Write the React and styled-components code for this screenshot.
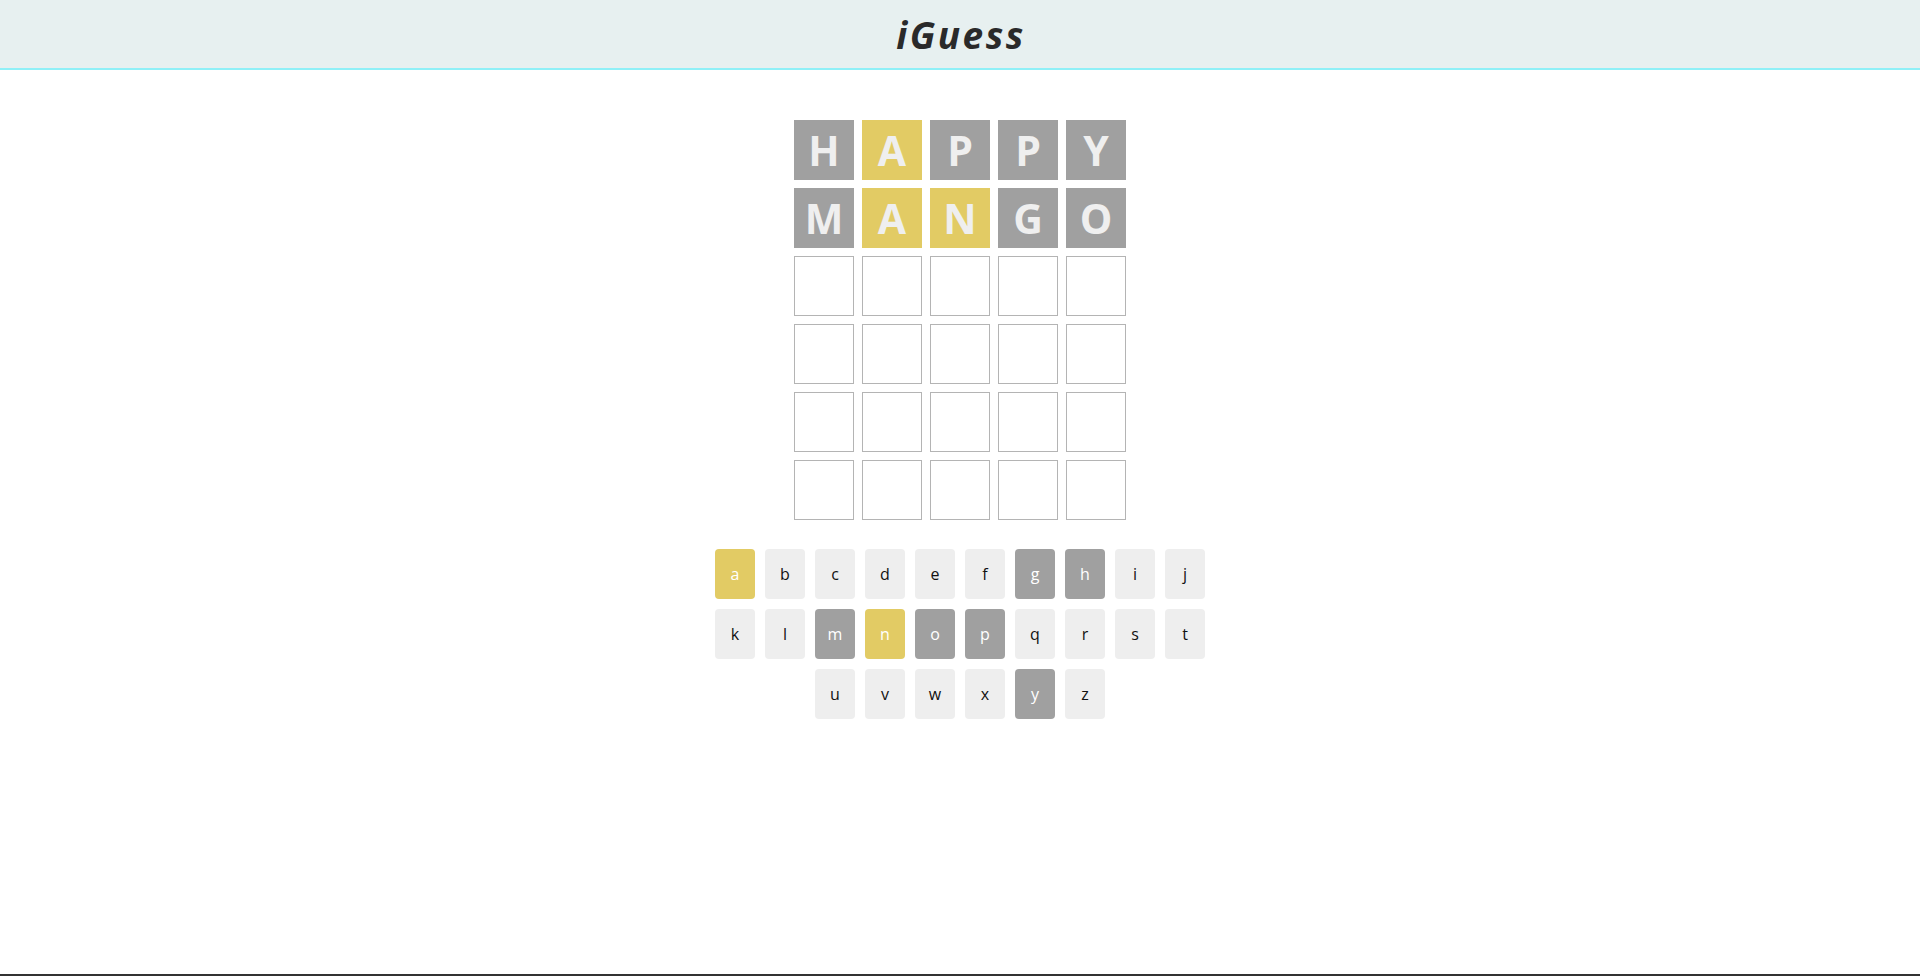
import React from 'react';
import styled, { createGlobalStyle } from 'styled-components';

const guesses = [
  { word: 'HAPPY', marks: ['gray', 'yellow', 'gray', 'gray', 'gray'] },
  { word: 'MANGO', marks: ['gray', 'yellow', 'yellow', 'gray', 'gray'] },
];

const keyRows = [
  ['a', 'b', 'c', 'd', 'e', 'f', 'g', 'h', 'i', 'j'],
  ['k', 'l', 'm', 'n', 'o', 'p', 'q', 'r', 's', 't'],
  ['u', 'v', 'w', 'x', 'y', 'z'],
];

const keyState = {
  a: 'yellow', n: 'yellow',
  g: 'gray', h: 'gray', m: 'gray', o: 'gray', p: 'gray', y: 'gray',
};

const colors = {
  gray: '#a0a0a0',
  yellow: '#e2cb64',
};

const App = () => {
  const rows = [];
  for (let r = 0; r < 6; r++) {
    const g = guesses[r];
    rows.push(
      <BoardRow key={r}>
        {[0, 1, 2, 3, 4].map((c) =>
          g ? (
            <Tile key={c} mark={g.marks[c]}>{g.word[c]}</Tile>
          ) : (
            <Tile key={c} />
          )
        )}
      </BoardRow>
    );
  }

  return (
    <>
      <GlobalStyle />
      <Page>
        <Header>
          <Title>iGuess</Title>
        </Header>
        <Main>
          <Board>{rows}</Board>
          <Keyboard>
            {keyRows.map((row, i) => (
              <KeyRow key={i}>
                {row.map((k) => (
                  <Key key={k} mark={keyState[k]}>{k}</Key>
                ))}
              </KeyRow>
            ))}
          </Keyboard>
        </Main>
        <BottomBar />
      </Page>
    </>
  );
};

const GlobalStyle = createGlobalStyle`
  html, body {
    margin: 0;
    padding: 0;
    background: #fff;
    font-family: "Open Sans", "Noto Sans", sans-serif;
  }
`;

const Page = styled.div`
  height: 976px;
  display: flex;
  flex-direction: column;
  overflow: hidden;
`;

const Header = styled.header`
  height: 68px;
  background: #e7f0f0;
  border-bottom: 2px solid #8ff0f7;
  display: flex;
  align-items: center;
  justify-content: center;
`;

const Title = styled.h1`
  margin: 0;
  font-family: "Open Sans", sans-serif;
  font-style: italic;
  font-weight: 700;
  font-size: 37px;
  letter-spacing: 2.5px;
  color: #2a2a2a;
  padding-left: 2px;
`;

const Main = styled.main`
  flex: 1;
  display: flex;
  flex-direction: column;
  align-items: center;
  padding-top: 50px;
`;

const Board = styled.div`
  display: flex;
  flex-direction: column;
  gap: 8px;
`;

const BoardRow = styled.div`
  display: flex;
  gap: 8px;
`;

const Tile = styled.div`
  box-sizing: border-box;
  width: 60px;
  height: 60px;
  display: flex;
  align-items: center;
  justify-content: center;
  background: ${(p) => (p.mark ? colors[p.mark] : '#fff')};
  border: ${(p) => (p.mark ? 'none' : '1px solid #b4b4b4')};
  color: #efefef;
  font-family: "Open Sans", sans-serif;
  font-weight: 700;
  font-size: 41px;
  line-height: 1;
`;

const Keyboard = styled.div`
  margin-top: 29px;
  display: flex;
  flex-direction: column;
  align-items: center;
  gap: 10px;
`;

const KeyRow = styled.div`
  display: flex;
  gap: 10px;
`;

const Key = styled.div`
  width: 40px;
  height: 50px;
  border-radius: 4px;
  display: flex;
  align-items: center;
  justify-content: center;
  background: ${(p) => (p.mark ? colors[p.mark] : '#eeeeee')};
  color: ${(p) => (p.mark ? '#fff' : '#111')};
  font-family: "Open Sans", sans-serif;
  font-size: 16px;
`;

const BottomBar = styled.div`
  height: 2px;
  background: #333;
`;

export default App;
